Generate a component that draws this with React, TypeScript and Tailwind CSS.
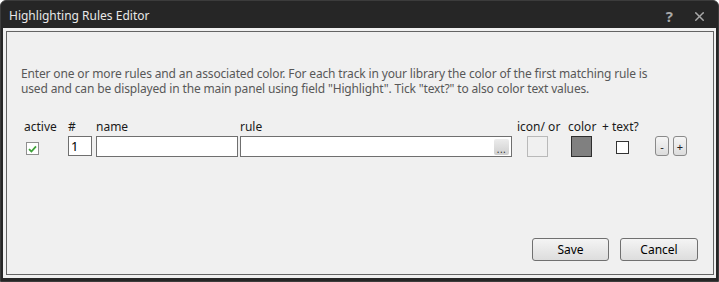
import { X } from 'lucide-react'

const font = { fontFamily: '"Noto Sans", "Open Sans", sans-serif' }

export default function App() {
  return (
    <div style={font} className="w-[719px] h-[282px] bg-[#262626] rounded-t-[6px] border border-[#3c3c3c] flex flex-col overflow-hidden">
      {/* title bar */}
      <div className="h-[27px] flex items-center pl-[8px] pr-[11px] pt-[3px] shrink-0">
        <span className="text-[#e8e8e8] text-[12px]">Highlighting Rules Editor</span>
        <div className="ml-auto flex items-center gap-[19px] text-[#a8a8a8]">
          <span className="text-[15px] font-bold leading-none">?</span>
          <X size={15} strokeWidth={2.4} />
        </div>
      </div>

      {/* client area */}
      <div className="flex-1 mx-[2px] mb-[3px] bg-[#f0f0f0] pt-[3px] pl-[3px] pr-[2px] pb-[3px] flex">
        <div className="flex-1 border border-[#646464] flex flex-col text-[12px]">
          <p className="mt-[34px] ml-[14px] w-[628px] leading-[15px] text-[#585858] tracking-[-0.15px]">
            Enter one or more rules and an associated color. For each track in your library the color of the first matching rule is used and can be displayed in the main panel using field "Highlight". Tick "text?" to also color text values.
          </p>

          <div className="mt-[23px] pl-[17px] flex text-[#1a1a1a]">
            <div className="w-[44px] flex flex-col">
              <span className="leading-[15px] h-[15px]">active</span>
              <div className="mt-[8px] ml-[2px] w-[13px] h-[13px] border border-[#8f8f8f] bg-white flex items-center justify-center">
                <svg width="9" height="8" viewBox="0 0 9 8">
                  <path d="M1 4.2 L3.4 6.5 L8 1.3" fill="none" stroke="#3fa33a" strokeWidth="1.8" />
                </svg>
              </div>
            </div>
            <div className="w-[28px] flex flex-col">
              <span className="leading-[15px] h-[15px]">#</span>
              <div className="mt-[2px] w-[24px] h-[20px] border border-[#6f6f6f] bg-white pl-[2px] text-[13px] leading-[18px] text-black">1</div>
            </div>
            <div className="w-[144px] flex flex-col">
              <span className="leading-[15px] h-[15px]">name</span>
              <div className="mt-[2px] w-[142px] h-[21px] border border-[#6f6f6f] bg-white" />
            </div>
            <div className="w-[277px] flex flex-col">
              <span className="leading-[15px] h-[15px]">rule</span>
              <div className="mt-[2px] w-[272px] h-[21px] border border-[#6f6f6f] bg-white flex items-center justify-end pr-[2px]">
                <div className="w-[15px] h-[16px] rounded-[2px] bg-gradient-to-b from-[#ececec] to-[#cfcfcf] flex items-end justify-center pb-[3px]">
                  <span className="text-[10px] leading-[6px] text-[#333] tracking-[0.5px]">...</span>
                </div>
              </div>
            </div>
            <div className="w-[51px] flex flex-col">
              <span className="leading-[15px] h-[15px] whitespace-nowrap">icon/ or</span>
              <div className="mt-[2px] ml-[10px] w-[21px] h-[21px] border border-[#b9b9b9] bg-[#f0f0f0]" />
            </div>
            <div className="w-[34px] flex flex-col">
              <span className="leading-[15px] h-[15px]">color</span>
              <div className="mt-[2px] ml-[3px] w-[21px] h-[21px] border border-[#2e2e2e] bg-[#808080]" />
            </div>
            <div className="w-[53px] flex flex-col">
              <span className="leading-[15px] h-[15px] whitespace-nowrap">+ text?</span>
              <div className="mt-[7px] ml-[14px] w-[13px] h-[13px] border border-[#333] bg-white" />
            </div>
            <div className="flex flex-col">
              <span className="leading-[15px] h-[15px]" />
              <div className="mt-[2px] flex gap-[4px]">
                <div className="w-[14px] h-[20px] rounded-[3px] border border-[#8a8a8a] bg-gradient-to-b from-[#f6f6f6] to-[#dcdcdc] flex items-center justify-center text-[11px] leading-none text-[#222]">-</div>
                <div className="w-[14px] h-[20px] rounded-[3px] border border-[#8a8a8a] bg-gradient-to-b from-[#f6f6f6] to-[#dcdcdc] flex items-center justify-center text-[11px] leading-none text-[#222]">+</div>
              </div>
            </div>
          </div>

          <div className="mt-auto mb-[13px] mr-[15px] flex justify-end gap-[11px] text-[12px] text-black">
            <button className="w-[77px] h-[23px] rounded-[3px] border border-[#707070] bg-gradient-to-b from-[#f4f4f4] to-[#dddddd]">Save</button>
            <button className="w-[78px] h-[23px] rounded-[3px] border border-[#707070] bg-gradient-to-b from-[#f4f4f4] to-[#dddddd]">Cancel</button>
          </div>
        </div>
      </div>
    </div>
  )
}
